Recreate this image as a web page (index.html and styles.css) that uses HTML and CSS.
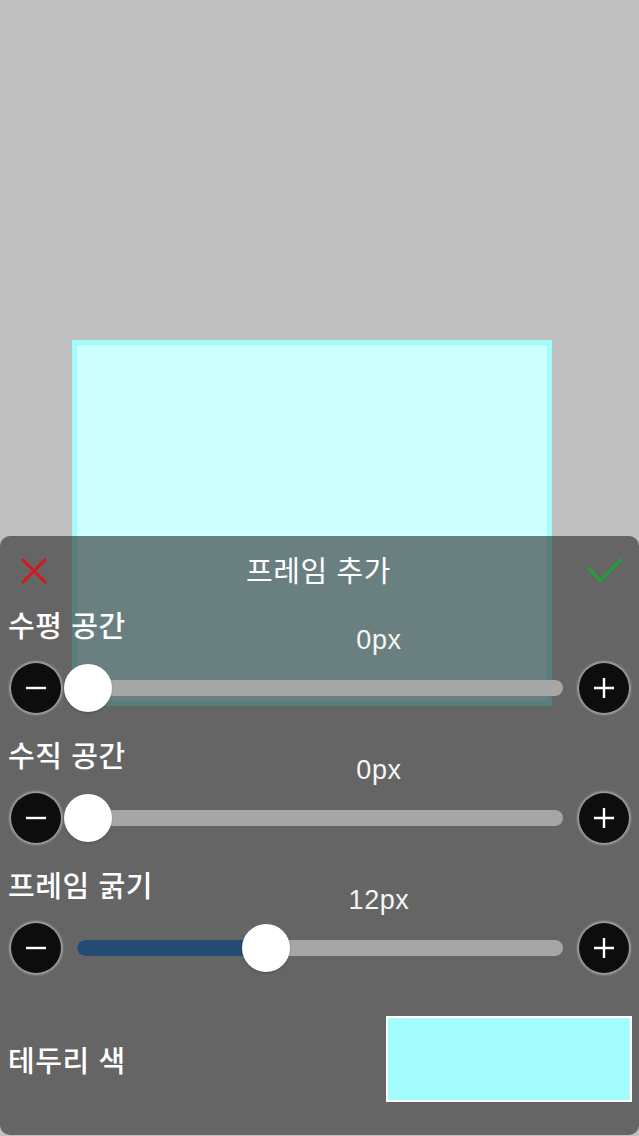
FILE: index.html
```html
<!DOCTYPE html>
<html lang="ko">
<head>
  <meta charset="UTF-8" />
  <meta name="viewport" content="width=device-width, initial-scale=1.0"/>
  <title>프레임 추가</title>
  <link rel="stylesheet" href="styles.css">
</head>
<body>
  <div class="stage">
    <div class="frame"></div>

    <!-- bottom sheet over the canvas -->
    <div class="panel">
      <div class="panel-head">
        <button class="icon-btn close" type="button">
          <svg width="28" height="28" viewBox="0 0 28 28"><path d="M2 2 L26 26 M26 2 L2 26" stroke="#d8161c" stroke-width="3" fill="none"/></svg>
        </button>
        <h1 class="title">프레임 추가</h1>
        <button class="icon-btn ok" type="button">
          <svg width="36" height="26" viewBox="0 0 36 26"><path d="M1.5 11 L13.5 23.5 L34.5 2" stroke="#1fa337" stroke-width="3" fill="none"/></svg>
        </button>
      </div>

      <div class="setting">
        <div class="setting-head">
          <span class="setting-label">수평 공간</span>
          <span class="setting-value">0px</span>
        </div>
        <div class="slider-row">
          <button class="step" type="button"><svg width="24" height="24" viewBox="0 0 24 24"><path d="M2 12 H22" stroke="#fff" stroke-width="2.4"/></svg></button>
          <div class="track" style="--p: 0">
            <div class="fill"></div>
            <div class="thumb"></div>
          </div>
          <button class="step" type="button"><svg width="24" height="24" viewBox="0 0 24 24"><path d="M2 12 H22 M12 2 V22" stroke="#fff" stroke-width="2.4"/></svg></button>
        </div>
      </div>

      <div class="setting">
        <div class="setting-head">
          <span class="setting-label">수직 공간</span>
          <span class="setting-value">0px</span>
        </div>
        <div class="slider-row">
          <button class="step" type="button"><svg width="24" height="24" viewBox="0 0 24 24"><path d="M2 12 H22" stroke="#fff" stroke-width="2.4"/></svg></button>
          <div class="track" style="--p: 0">
            <div class="fill"></div>
            <div class="thumb"></div>
          </div>
          <button class="step" type="button"><svg width="24" height="24" viewBox="0 0 24 24"><path d="M2 12 H22 M12 2 V22" stroke="#fff" stroke-width="2.4"/></svg></button>
        </div>
      </div>

      <div class="setting">
        <div class="setting-head">
          <span class="setting-label">프레임 굵기</span>
          <span class="setting-value">12px</span>
        </div>
        <div class="slider-row">
          <button class="step" type="button"><svg width="24" height="24" viewBox="0 0 24 24"><path d="M2 12 H22" stroke="#fff" stroke-width="2.4"/></svg></button>
          <div class="track" style="--p: 0.384">
            <div class="fill"></div>
            <div class="thumb"></div>
          </div>
          <button class="step" type="button"><svg width="24" height="24" viewBox="0 0 24 24"><path d="M2 12 H22 M12 2 V22" stroke="#fff" stroke-width="2.4"/></svg></button>
        </div>
      </div>

      <div class="color-row">
        <span class="setting-label">테두리 색</span>
        <div class="swatch"></div>
      </div>
    </div>
  </div>
</body>
</html>
```

FILE: styles.css
```css
body {
  margin: 0;
  padding: 0;
  font-family: "Noto Sans CJK KR", "Noto Sans", sans-serif;
  color: #fff;
}
.stage {
  position: relative;
  width: 639px;
  height: 1136px;
  overflow: hidden;
  background-color: #c0c0c0;
  padding-top: 340px;
  box-sizing: border-box;
}
.frame {
  width: 480px;
  height: 366px;
  margin-left: 72px;
  box-sizing: border-box;
  border: 5px solid #a2fcfc;
  background-color: #cdffff;
}
.panel {
  position: absolute;
  left: 0;
  right: 0;
  top: 536px;
  bottom: 1px;
  border-radius: 10px;
  background-color: rgba(35, 35, 35, 0.58);
}
.panel-head {
  display: grid;
  grid-template-columns: 1fr auto 1fr;
  align-items: center;
  height: 66px;
  padding: 0 16px 0 20px;
  margin-bottom: 5px;
}
.icon-btn {
  background: none;
  border: none;
  padding: 0;
  display: flex;
}
.icon-btn svg {
  display: block;
}
.close {
  justify-self: start;
  margin-top: 3px;
}
.ok {
  justify-self: end;
  margin-top: 2px;
}
.title {
  margin: 0 6px 0 0;
  font-size: 29px;
  font-weight: 400;
  letter-spacing: 0.6px;
  line-height: 34px;
}
.setting {
  margin-bottom: 24px;
}
.setting-head {
  display: grid;
  grid-template-areas: "stack";
  height: 47px;
}
.setting-label {
  grid-area: stack;
  justify-self: start;
  padding-left: 8px;
  font-size: 29px;
  font-weight: 500;
  letter-spacing: 0.6px;
  line-height: 34px;
}
.setting-value {
  grid-area: stack;
  justify-self: start;
  width: 200px;
  margin-left: 279px;
  margin-top: 18px;
  text-align: center;
  font-family: "Liberation Sans", Arial, sans-serif;
  font-size: 27px;
  letter-spacing: 0.6px;
  line-height: 30px;
  color: #f6f6f6;
}
.slider-row {
  display: flex;
  align-items: center;
  gap: 16px;
  height: 50px;
  margin-top: 9px;
  padding: 0 10px 0 11px;
}
.step {
  flex: none;
  width: 50px;
  height: 50px;
  padding: 0;
  border: none;
  border-radius: 50%;
  background-color: #0d0d0d;
  box-shadow: 0 0 2px 2px rgba(215, 215, 215, 0.5);
  display: flex;
  align-items: center;
  justify-content: center;
}
.step svg {
  display: block;
}
.track {
  position: relative;
  flex: 1;
  height: 16px;
  border-radius: 8px;
  background-color: #a6a6a6;
}
.fill {
  height: 100%;
  width: calc(11px + (100% - 22px) * var(--p));
  border-radius: 8px;
  background-color: #244b74;
}
.thumb {
  position: absolute;
  top: 50%;
  left: calc(11px + (100% - 22px) * var(--p));
  width: 48px;
  height: 48px;
  margin: -24px 0 0 -24px;
  border-radius: 50%;
  background-color: #fff;
  box-shadow: 0 1px 2px rgba(0, 0, 0, 0.25);
}
.color-row {
  display: flex;
  align-items: center;
  justify-content: space-between;
  padding: 19px 7px 0 0;
}
.color-row .setting-label {
  padding-left: 8px;
}
.swatch {
  width: 246px;
  height: 86px;
  box-sizing: border-box;
  border: 2px solid #fff;
  background-color: #a4fcfc;
}
```
